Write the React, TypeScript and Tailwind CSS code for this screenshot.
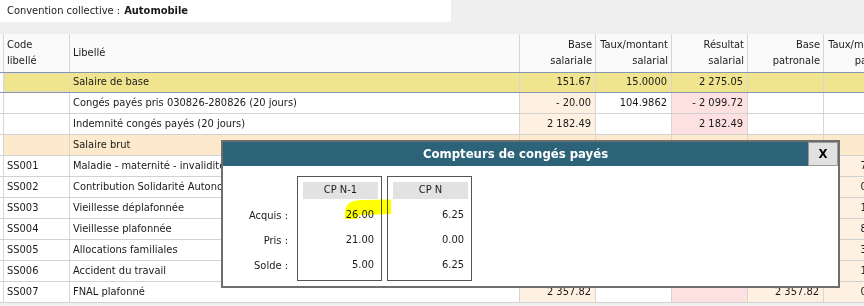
import React from "react";

type Row = {
  code: string;
  label: string;
  c3: string;
  c4: string;
  c5: string;
  c6: string;
  c7: string;
  kind: "base" | "normal" | "brut" | "ss";
};

const rows: Row[] = [
  { code: "", label: "Salaire de base", c3: "151.67", c4: "15.0000", c5: "2 275.05", c6: "", c7: "", kind: "base" },
  { code: "", label: "Congés payés pris 030826-280826 (20 jours)", c3: "- 20.00", c4: "104.9862", c5: "- 2 099.72", c6: "", c7: "", kind: "normal" },
  { code: "", label: "Indemnité congés payés (20 jours)", c3: "2 182.49", c4: "", c5: "2 182.49", c6: "", c7: "", kind: "normal" },
  { code: "", label: "Salaire brut", c3: "", c4: "", c5: "", c6: "", c7: "", kind: "brut" },
  { code: "SS001", label: "Maladie - maternité - invalidité - décès", c3: "2 357.82", c4: "", c5: "", c6: "2 357.82", c7: "7.0000", kind: "ss" },
  { code: "SS002", label: "Contribution Solidarité Autonomie", c3: "2 357.82", c4: "", c5: "", c6: "2 357.82", c7: "0.3000", kind: "ss" },
  { code: "SS003", label: "Vieillesse déplafonnée", c3: "2 357.82", c4: "0.4000", c5: "9.43", c6: "2 357.82", c7: "1.9000", kind: "ss" },
  { code: "SS004", label: "Vieillesse plafonnée", c3: "2 357.82", c4: "6.9000", c5: "162.69", c6: "2 357.82", c7: "8.5500", kind: "ss" },
  { code: "SS005", label: "Allocations familiales", c3: "2 357.82", c4: "", c5: "", c6: "2 357.82", c7: "3.4500", kind: "ss" },
  { code: "SS006", label: "Accident du travail", c3: "2 357.82", c4: "", c5: "", c6: "2 357.82", c7: "1.1000", kind: "ss" },
  { code: "SS007", label: "FNAL plafonné", c3: "2 357.82", c4: "", c5: "", c6: "2 357.82", c7: "0.1000", kind: "ss" },
];

function bgFor(kind: Row["kind"], col: number): string {
  if (kind === "base") return "bg-[#f1e48f]";
  if (kind === "brut") return "bg-[#fde9cc]";
  if (kind === "normal") {
    if (col === 3) return "bg-[#fef1e2]";
    if (col === 5) return "bg-[#fde1e1]";
    return "bg-white";
  }
  if (col === 3 || col === 6 || col === 7) return "bg-[#fef1e2]";
  if (col === 5) return "bg-[#fde1e1]";
  return "bg-white";
}

export default function App() {
  const font = { fontFamily: '"DejaVu Sans Condensed", "DejaVu Sans", sans-serif' };
  return (
    <div
      className="relative w-[864px] h-[306px] overflow-hidden bg-[#efefef] text-[11px] text-[#1a1a1a]"
      style={font}
    >
      {/* top bar */}
      <div className="h-[22px] w-[451px] bg-white flex items-center pl-[7px] text-[11px]">
        <span>Convention collective :</span>
        <span className="ml-[4px] font-bold">Automobile</span>
      </div>
      <div className="h-[12px]" />

      {/* table */}
      <div className="w-[900px]">
        <div className="flex h-[39px] bg-[#fafafa] border-b border-[#8796b2] leading-[16px]">
          <div className="w-[4px] border-r border-[#d6d6d6]" />
          <div className="w-[66px] border-r border-[#d6d6d6] pl-[3px] flex flex-col justify-center">
            <span>Code</span>
            <span>libellé</span>
          </div>
          <div className="w-[450px] border-r border-[#d6d6d6] pl-[3px] flex items-center">Libellé</div>
          <div className="w-[76px] border-r border-[#d6d6d6] pr-[3px] flex flex-col justify-center items-end">
            <span>Base</span>
            <span>salariale</span>
          </div>
          <div className="w-[76px] border-r border-[#d6d6d6] pr-[3px] flex flex-col justify-center items-end">
            <span>Taux/montant</span>
            <span>salarial</span>
          </div>
          <div className="w-[76px] border-r border-[#d6d6d6] pr-[3px] flex flex-col justify-center items-end">
            <span>Résultat</span>
            <span>salarial</span>
          </div>
          <div className="w-[76px] border-r border-[#d6d6d6] pr-[3px] flex flex-col justify-center items-end">
            <span>Base</span>
            <span>patronale</span>
          </div>
          <div className="w-[76px] border-r border-[#d6d6d6] pr-[3px] flex flex-col justify-center items-end">
            <span>Taux/montant</span>
            <span>patronal</span>
          </div>
        </div>

        {rows.map((r, i) => {
          const borderB =
            r.kind === "base" ? "border-b border-[#8796b2]" : "border-b border-[#d2d2d2]";
          const h = r.kind === "base" ? "h-[20px]" : "h-[21px]";
          const cell = "border-r border-[#d6d6d6] flex items-center";
          return (
            <div key={i} className={`flex ${h} ${borderB}`}>
              <div className="w-[4px] bg-white border-r border-[#d6d6d6]" />
              <div
                className={`w-[66px] ${bgFor(r.kind, 1)} ${cell} pl-[3px] ${
                  r.kind === "base" ? "border border-dotted border-[#555]" : ""
                }`}
              >
                {r.code}
              </div>
              <div className={`w-[450px] ${bgFor(r.kind, 2)} ${cell} pl-[3px] whitespace-nowrap`}>
                {r.label}
              </div>
              <div className={`w-[76px] ${bgFor(r.kind, 3)} ${cell} justify-end pr-[4px]`}>{r.c3}</div>
              <div className={`w-[76px] ${bgFor(r.kind, 4)} ${cell} justify-end pr-[4px]`}>{r.c4}</div>
              <div className={`w-[76px] ${bgFor(r.kind, 5)} ${cell} justify-end pr-[4px]`}>{r.c5}</div>
              <div className={`w-[76px] ${bgFor(r.kind, 6)} ${cell} justify-end pr-[4px]`}>{r.c6}</div>
              <div className={`w-[76px] ${bgFor(r.kind, 7)} ${cell} justify-end pr-[4px]`}>{r.c7}</div>
            </div>
          );
        })}
      </div>

      {/* dialog */}
      <div className="absolute left-[221px] top-[140px] w-[619px] h-[148px] border-2 border-[#6e6e6e] bg-white flex flex-col">
        <div className="h-[24px] bg-[#2d6379] flex items-stretch">
          <div className="flex-1 flex items-center justify-center text-white font-bold text-[13px]">
            Compteurs de congés payés
          </div>
          <div className="w-[30px] bg-[#e1e1e1] border border-[#9a9a9a] flex items-center justify-center font-bold text-[13px] text-black">
            X
          </div>
        </div>
        <div className="relative flex-1 flex pt-[10px]">
          <div className="w-[65px] flex flex-col items-end pt-[28px]">
            <div className="h-[25px] flex items-center">Acquis :</div>
            <div className="h-[25px] flex items-center">Pris :</div>
            <div className="h-[25px] flex items-center">Solde :</div>
          </div>
          <div className="ml-[9px] w-[85px] h-[105px] border border-[#555]">
            <div className="mt-[5px] ml-[5px] mr-[3px] h-[17px] bg-[#e2e2e2] flex items-center justify-center">
              CP N-1
            </div>
            <div className="mt-[4px] pr-[7px]">
              <div className="h-[25px] flex items-center justify-end">26.00</div>
              <div className="h-[25px] flex items-center justify-end">21.00</div>
              <div className="h-[25px] flex items-center justify-end">5.00</div>
            </div>
          </div>
          <div className="ml-[5px] w-[85px] h-[105px] border border-[#555]">
            <div className="mt-[5px] ml-[5px] mr-[3px] h-[17px] bg-[#e2e2e2] flex items-center justify-center">
              CP N
            </div>
            <div className="mt-[4px] pr-[7px]">
              <div className="h-[25px] flex items-center justify-end">6.25</div>
              <div className="h-[25px] flex items-center justify-end">0.00</div>
              <div className="h-[25px] flex items-center justify-end">6.25</div>
            </div>
          </div>
          {/* highlighter mark */}
          <svg
            className="absolute left-[120px] top-[32px] mix-blend-multiply"
            width="50"
            height="22"
            viewBox="0 0 50 22"
          >
            <defs>
              <filter id="hb" x="-10%" y="-10%" width="120%" height="120%">
                <feGaussianBlur stdDeviation="0.7" />
              </filter>
            </defs>
            <path
              d="M4,7 Q8,2 20,2 L48,1.5 L48,16 L16,17 L14,21 L2,21 Q1,14 4,7 Z"
              fill="#ffff00"
              filter="url(#hb)"
            />
          </svg>
        </div>
      </div>
    </div>
  );
}
